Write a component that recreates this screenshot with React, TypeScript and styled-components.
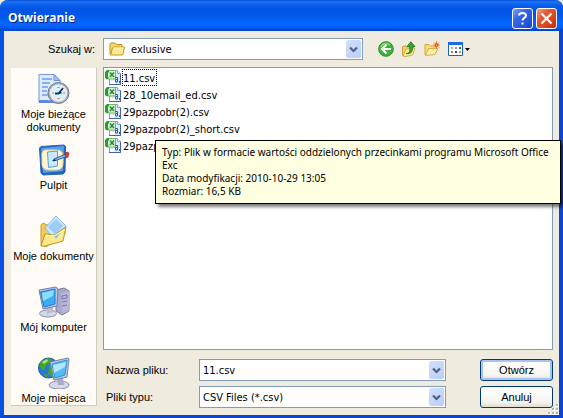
import React from "react";
import styled, { createGlobalStyle, css } from "styled-components";

const GlobalStyle = createGlobalStyle`
  * { box-sizing: border-box; }
  body {
    margin: 0;
    background: #ece9d8;
    color: #000;
    font: 11px/13px "Liberation Sans", Arial, sans-serif;
  }
  button, input, select { font: inherit; color: inherit; margin: 0; }
  svg { display: block; flex: none; }
`;

const tahoma = css`
  font-family: "DejaVu Sans Condensed", Tahoma, sans-serif;
`;

const Window = styled.main`
  position: relative;
  min-height: 100vh;
  display: flex;
  flex-direction: column;
  border: solid #0a45d8;
  border-width: 0 4px 3px;
  border-left-color: #0a50e4;
  border-radius: 8px 8px 0 0;
  background: #efebde;
`;

const TitleBar = styled.header`
  height: 31px;
  margin: 0 -4px;
  padding: 5px 6px 0 8px;
  display: flex;
  align-items: center;
  gap: 3px;
  border-radius: 8px 8px 0 0;
  background: linear-gradient(
    #0a4fd8 0,
    #1c74f4 2px,
    #0a60ee 5px,
    #0254e3 9px,
    #0256ea 15px,
    #0566ff 23px,
    #0560f8 27px,
    #003fc8 31px
  );
`;

const Title = styled.h1`
  flex: 1;
  margin: 0;
  color: #fff;
  font: bold 12px/18px "Open Sans", "Trebuchet MS", sans-serif;
  text-shadow: 1px 1px 0 #0a1e86;
`;

const CaptionButton = styled.button<{ $close?: boolean }>`
  width: 21px;
  height: 21px;
  padding: 0;
  display: grid;
  place-items: center;
  border: 1px solid #fff;
  border-radius: 3px;
  background: ${({ $close }) =>
    $close
      ? "linear-gradient(135deg, #f0a088, #e25a35 35%, #d8431a 70%, #b83010)"
      : "linear-gradient(135deg, #7fa5f5, #3568e8 35%, #2458dc 70%, #1b48c0)"};
`;

const Body = styled.div`
  flex: 1;
  display: flex;
  flex-direction: column;
  gap: 7px;
  padding: 7px 6px 7px 7px;
`;

const LookInRow = styled.div`
  display: flex;
  align-items: center;
`;

const LookInLabel = styled.label`
  width: 92px;
  padding-right: 8px;
  text-align: right;
`;

const Field = styled.div<{ $look?: boolean }>`
  height: 22px;
  display: flex;
  align-items: center;
  padding: 1px;
  border: 1px solid #7f9db9;
  background: #fff;
  ${({ $look }) => $look && css`
    flex: 1;
    padding-left: 5px;
    margin-right: 15px;
  `}
`;

const ArrowBox = styled.button`
  flex: none;
  width: 15px;
  height: 18px;
  padding: 0;
  display: grid;
  place-items: center;
  border: 0;
  border-radius: 2px;
  background: linear-gradient(135deg, #d3e0fd, #b9cdf8);
`;

const fieldText = css`
  ${tahoma}
  flex: 1;
  min-width: 0;
  height: 18px;
  padding: 0 2px;
  border: 0;
  outline: 0;
  background: transparent;
`;

const TextInput = styled.input`
  ${fieldText}
`;

const Select = styled.select`
  ${fieldText}
  appearance: none;
`;

const LookInSelect = styled(Select)`
  padding-left: 6px;
`;

const Tools = styled.div`
  width: 175px;
  display: flex;
  align-items: center;
  gap: 7px;
`;

const ToolButton = styled.button`
  padding: 0;
  border: 0;
  background: none;
`;

const Columns = styled.div`
  flex: 1;
  display: flex;
  gap: 6px;
`;

const Places = styled.nav`
  width: 86px;
  margin: 1px 0 0;
  padding-top: 5px;
  align-self: flex-start;
  background: #fffcf8;
  border-right: 1px solid #cfcbbd;
  border-bottom: 1px solid #cfcbbd;
`;

const Place = styled.a`
  height: 71px;
  display: flex;
  flex-direction: column;
  align-items: center;
  gap: 3px;
  color: #000;
  text-align: center;
  text-decoration: none;
  &:last-child { height: auto; }
`;

const Main = styled.div`
  flex: 1;
  min-width: 0;
  display: flex;
  flex-direction: column;
  gap: 9px;
`;

const ListPane = styled.div`
  position: relative;
  flex: 1;
  border: 1px solid #7f9db9;
  background: #fff;
`;

const FileList = styled.ul`
  ${tahoma}
  margin: 0;
  padding: 1px;
  list-style: none;
`;

const FileRow = styled.li`
  height: 17px;
  display: flex;
  align-items: center;
`;

const FileName = styled.span<{ $focused?: boolean }>`
  height: 17px;
  padding: 0 1px 0 0;
  line-height: 17px;
  border: 1px ${({ $focused }) => ($focused ? "dotted #000" : "solid transparent")};
`;

const Tooltip = styled.div`
  font-family: "Noto Sans", Tahoma, sans-serif;
  font-size: 10px;
  position: absolute;
  top: 72px;
  left: 51px;
  right: -9px;
  padding: 5px 6px;
  border: 1px solid #000;
  background: #ffffe1;
  box-shadow: 3px 3px 3px rgba(0, 0, 0, 0.5);
`;

const Form = styled.form`
  display: grid;
  grid-template-columns: 96px 1fr 73px;
  column-gap: 0;
  row-gap: 5px;
  align-items: center;
`;

const FormLabel = styled.label`
  padding-left: 3px;
`;

const FormField = styled(Field)`
  margin-right: 34px;
`;

const PushButton = styled.button<{ $default?: boolean }>`
  height: 22px;
  padding: 0;
  border: 1px solid #003c74;
  border-radius: 3px;
  background: linear-gradient(#fff, #f6f5f0 75%, #dfdbcf);
  box-shadow: ${({ $default }) => ($default ? "inset 0 0 0 2px #a9c3f0" : "none")};
`;

const Grip = styled.svg`
  position: absolute;
  right: 0;
  bottom: 0;
`;

const Chevron = () => (
  <svg width="9" height="7" viewBox="0 0 9 7" aria-hidden="true">
    <path d="M1 1.5 4.5 5 8 1.5" fill="none" stroke="#4d6185" strokeWidth="2.2" />
  </svg>
);

const FolderIcon = () => (
  <svg width="16" height="16" viewBox="0 0 16 16" aria-hidden="true">
    <path d="M1 13V3.500L2 2h4L7.500 3.500H13V6" fill="#f7d768" stroke="#bd8f24" />
    <path d="M1.500 14 3.500 7l1-1H15.500l-1.500 7-1 1z" fill="#fde98f" stroke="#c4962a" />
    <path d="M4.500 7h10" stroke="#fff8d0" />
  </svg>
);

const BackIcon = () => (
  <svg width="16" height="16" viewBox="0 0 16 16" aria-hidden="true">
    <circle cx="8" cy="8" r="7.300" fill="#3fb038" stroke="#2c8f30" />
    <path d="M3 6a5.500 5.500 0 0 1 9-2" stroke="#8cdb7c" strokeWidth="1.500" fill="none" />
    <path d="M8.500 3.500 4 8l4.500 4.500M4.500 8H13" fill="none" stroke="#fff" strokeWidth="2.200" />
  </svg>
);

const UpIcon = () => (
  <svg width="16" height="16" viewBox="0 0 16 16" aria-hidden="true">
    <path d="M1.500 14V5.500l3-1 1 1.500 7-1v7l-8 3z" fill="#f4d163" stroke="#c9a139" />
    <path d="m2 15 3-7 9-1-2.500 7-7 1.500z" fill="#fff0a0" stroke="#d4ad43" />
    <path d="M5 12.500c4 0 4-3 3.500-7H6L9.800.8 14 5.500h-2.500c.5 5-1.500 8-6.500 7z" fill="#36a72f" stroke="#177a1c" strokeWidth=".8" />
  </svg>
);

const NewFolderIcon = () => (
  <svg width="16" height="16" viewBox="0 0 16 16" aria-hidden="true">
    <path d="M1 14V3.500h4L6.500 5H12v2" fill="#f8db75" stroke="#d3a842" />
    <path d="m1.500 14.500 3-7H14l-3 6z" fill="#fff0a0" stroke="#d8af4c" />
    <path d="M12.500 0v8M9 4h7M10 1.500l5 5M15 1.500l-5 5" stroke="#f47b45" />
    <circle cx="12.500" cy="4" r="1.800" fill="#ee3d20" />
    <circle cx="12.500" cy="4" r=".7" fill="#ffe24a" />
  </svg>
);

const ViewsIcon = () => (
  <svg width="24" height="16" viewBox="0 0 24 16" aria-hidden="true">
    <path fill="#fff" stroke="#1663cf" d="M1.500 1.500h14v13h-14z" />
    <path fill="#1c6be0" d="M1 1h15v3H1z" />
    <path fill="#b0a0a8" d="M4 6h2v2H4z" />
    <path fill="#8795dc" d="M8 6h2v2H8z" />
    <path fill="#20852e" d="M12 6h2v2h-2z" />
    <path fill="#e0663c" d="M4 10h2v2H4z" />
    <path fill="#1c3fa8" d="M8 10h2v2H8z" />
    <path fill="#c99a38" d="M12 10h2v2h-2z" />
    <path d="M18 7h5l-2.500 3z" />
  </svg>
);

const CsvIcon = () => (
  <svg width="17" height="17" viewBox="0 0 17 17" aria-hidden="true">
    <path d="M4.500 1.500h8l3 3v11h-11z" fill="#dceaff" stroke="#7fa3d8" />
    <path d="M4 15.500h11.500v-11" fill="none" stroke="#3f66a4" />
    <path d="M12.500 1.500v3h3" fill="#fff" stroke="#88a8d4" />
    <path d="M2.500 1.500h8v8.500h-8z" fill="#d9f2d0" stroke="#6dba62" />
    <path d="M0 3l2-2h2v2L3 4v4l1 1-2 1.500L0 9z" fill="#2a9c34" />
    <path d="m5 3.500 4 4.500M9 3.500 5 8" stroke="#2c8a3e" strokeWidth="1.600" />
    <path d="M5 12h5v3H5z" fill="#fff" />
    <path d="M10 8.500h2.500V13H10.500v-2.500h2" fill="none" stroke="#35599b" />
    <path d="M14.500 12v2" stroke="#35599b" />
  </svg>
);

const RecentIcon = () => (
  <svg width="32" height="32" viewBox="0 0 32 32" aria-hidden="true">
    <path d="M1 1.500h15l6 6v22H1z" fill="#deebff" stroke="#7397d8" />
    <path d="M16 1.500v6h6z" fill="#a9c6f5" stroke="#6c93d6" />
    <path d="M4 6h10M4 10h8M4 14h6M4 18h5M4 22h6" stroke="#8db0ec" strokeWidth="2" />
    <path d="M1 27c8 0 13 0 20 2v1H1z" fill="#5c8be2" />
    <circle cx="20.500" cy="20" r="10.500" fill="#a4adb8" stroke="#727d8c" />
    <circle cx="20.500" cy="20" r="8" fill="#d9f0fd" stroke="#e9edf1" strokeWidth="1.500" />
    <path d="M20.500 14v1M20.500 25v1M14.500 20h1M25.500 20h1" stroke="#e67a3e" strokeWidth="2" />
    <path d="m25 15-4.500 5.500H17M20.500 20.500l3-1" fill="none" stroke="#173457" strokeWidth="1.800" />
  </svg>
);

const DesktopIcon = () => (
  <svg width="32" height="32" viewBox="0 0 32 32" aria-hidden="true">
    <path d="M1.500 4 3 2.500 26 1l1.500 1.500L27 28l-2 2-20 1-2-2z" fill="#1d66c5" stroke="#2b62ad" />
    <path d="m3 4 23-2-1 25-20 2z" fill="#55a0ec" />
    <path d="M8 6h10q7 0 7 6v7q0 7-7 7h-7q-7 0-7-6v-7q-1-7 4-7" fill="#fff6d5" stroke="#f2d889" />
    <path d="m9.500 8 10-1v15l-9 1.500z" fill="#cce9ff" stroke="#4ca0e8" />
    <path d="m16 15 12-5 2 2-11 4-4 1z" fill="#91bef1" stroke="#285ca7" />
    <path d="m27 10 2-2 2 1-1 4-2 1z" fill="#d64227" stroke="#9d2319" strokeWidth=".7" />
    <path d="m14 17 3-2 1 2z" fill="#17355f" />
  </svg>
);

const DocumentsIcon = () => (
  <svg width="32" height="32" viewBox="0 0 32 32" aria-hidden="true">
    <path d="M3 30V10l2-2 4 2 15-2 3 3v8L8 32z" fill="#f2ca55" stroke="#c79a32" />
    <path d="M7 13 18 1l10 10-11 14z" fill="#c8e6ff" stroke="#88b8e4" />
    <path d="m10 12 8-8 7 7-8 8z" fill="#81bdf2" opacity=".6" />
    <path d="m3 31 4-12 9 1 12-8-3 14-18 5z" fill="#ffe989" stroke="#c4922c" />
    <path d="m15 20 8-3-5 7z" fill="#8cc9ef" />
    <path d="m8 20 8 1 10-6" fill="none" stroke="#fffad1" />
  </svg>
);

const ComputerIcon = () => (
  <svg width="32" height="32" viewBox="0 0 32 32" aria-hidden="true">
    <path d="m18 4 8-2 5 3v20l-7 4-6-4z" fill="#aaa9cd" stroke="#76749f" />
    <path d="m23 7 8-2v20l-7 3z" fill="#b7b6d9" />
    <path d="m24 10 5-1v3l-5 1zm0 6 5-1M24 20l5-1" fill="none" stroke="#7a79a8" />
    <ellipse cx="10" cy="27.500" rx="8.500" ry="3.500" fill="#d7d9e8" stroke="#8a8daa" />
    <path d="m9 21 6-1v6l-6 2z" fill="#b8bbd1" />
    <path d="m1 4 17-3 2 2-1 17-14 3z" fill="#bfc5df" stroke="#737ca8" />
    <path d="m2.500 6 14.500-3v15L6 21z" fill="#38adf2" stroke="#257ac9" />
    <path d="m4 7 12-3-1 6L5 15z" fill="#8bdcff" />
  </svg>
);

const NetworkIcon = () => (
  <svg width="32" height="32" viewBox="0 0 32 32" aria-hidden="true">
    <circle cx="10.500" cy="11" r="10" fill="#2679d7" stroke="#1a56aa" />
    <path d="M2 6q5-6 12-4l-3 5-3 1-2 6-4-4zm9 3 6-4 2 10-5 5-4-3zM4 16l6 2-1 3z" fill="#40a62e" />
    <path d="m4 5 5-3 1 2-4 3z" fill="#aee867" />
    <ellipse cx="21" cy="28" rx="10" ry="4" fill="#d7d9e8" stroke="#8b8eab" />
    <path d="m19 21 6-1 1 8h-6z" fill="#a8abc7" />
    <path d="m12 5 18-4 1 1-2 18-13 3z" fill="#c6cbe0" stroke="#7780a8" />
    <path d="m14 7 15-4-2 15-10 3z" fill="#55bdf6" stroke="#2f8fd7" />
    <path d="m15 8 13-3-1 5-11 6z" fill="#b0e6ff" />
  </svg>
);

const places = [
  { icon: <RecentIcon />, label: <>Moje bieżące<br />dokumenty</> },
  { icon: <DesktopIcon />, label: "Pulpit" },
  { icon: <DocumentsIcon />, label: "Moje dokumenty" },
  { icon: <ComputerIcon />, label: "Mój komputer" },
  { icon: <NetworkIcon />, label: "Moje miejsca" },
];

const files = [
  "11.csv",
  "28_10email_ed.csv",
  "29pazpobr(2).csv",
  "29pazpobr(2)_short.csv",
  "29pazp",
];

const tools = [
  { name: "Wstecz", icon: <BackIcon /> },
  { name: "Do góry", icon: <UpIcon /> },
  { name: "Nowy folder", icon: <NewFolderIcon /> },
  { name: "Widoki", icon: <ViewsIcon /> },
];

export default function App() {
  return (
    <>
      <GlobalStyle />
      <Window>
        <TitleBar>
          <Title>Otwieranie</Title>
          <CaptionButton aria-label="Pomoc">
            <svg width="15" height="17" viewBox="0 0 15 17">
              <path d="M4 5.500C4 2 11 2 11 5.500c0 2.500-3.500 2.500-3.500 5" fill="none" stroke="#fff" strokeWidth="2" />
              <path d="M6.500 12.500h2v2h-2z" fill="#fff" />
            </svg>
          </CaptionButton>
          <CaptionButton $close aria-label="Zamknij">
            <svg width="13" height="13" viewBox="0 0 13 13">
              <path d="m1.500 1.500 10 10m0-10-10 10" stroke="#fff" strokeWidth="2.200" />
            </svg>
          </CaptionButton>
        </TitleBar>
        <Body>
          <LookInRow>
            <LookInLabel htmlFor="folder">Szukaj w:</LookInLabel>
            <Field $look>
              <FolderIcon />
              <LookInSelect id="folder">
                <option>exlusive</option>
              </LookInSelect>
              <ArrowBox as="span"><Chevron /></ArrowBox>
            </Field>
            <Tools>
              {tools.map((tool) => (
                <ToolButton key={tool.name} aria-label={tool.name}>{tool.icon}</ToolButton>
              ))}
            </Tools>
          </LookInRow>
          <Columns>
            <Places>
              {places.map((place, i) => (
                <Place key={i} href="#">
                  {place.icon}
                  <span>{place.label}</span>
                </Place>
              ))}
            </Places>
            <Main>
              <ListPane>
                <FileList>
                  {files.map((file, i) => (
                    <FileRow key={file}>
                      <CsvIcon />
                      <FileName $focused={i === 0}>{file}</FileName>
                    </FileRow>
                  ))}
                </FileList>
                <Tooltip role="tooltip">
                  Typ: Plik w formacie wartości oddzielonych przecinkami programu Microsoft Office
                  <br />
                  Exc
                  <br />
                  Data modyfikacji: 2010-10-29 13:05
                  <br />
                  Rozmiar: 16,5 KB
                </Tooltip>
              </ListPane>
              <Form onSubmit={(e) => e.preventDefault()}>
                <FormLabel htmlFor="name">Nazwa pliku:</FormLabel>
                <FormField>
                  <TextInput id="name" defaultValue="11.csv" />
                  <ArrowBox type="button" aria-label="Pokaż listę"><Chevron /></ArrowBox>
                </FormField>
                <PushButton $default type="submit">Otwórz</PushButton>
                <FormLabel htmlFor="type">Pliki typu:</FormLabel>
                <FormField>
                  <Select id="type">
                    <option>CSV Files (*.csv)</option>
                  </Select>
                  <ArrowBox as="span"><Chevron /></ArrowBox>
                </FormField>
                <PushButton type="button">Anuluj</PushButton>
              </Form>
            </Main>
          </Columns>
        </Body>
        <Grip width="12" height="12" viewBox="0 0 12 12" aria-hidden="true">
          <path fill="#fff" d="M9 1h3v3H9zM9 5h3v3H9zM5 5h3v3H5zM1 9h3v3H1zM5 9h3v3H5zM9 9h3v3H9z" />
          <path fill="#b8b4a2" d="M9 1h2v2H9zM9 5h2v2H9zM5 5h2v2H5zM1 9h2v2H1zM5 9h2v2H5zM9 9h2v2H9z" />
        </Grip>
      </Window>
    </>
  );
}
